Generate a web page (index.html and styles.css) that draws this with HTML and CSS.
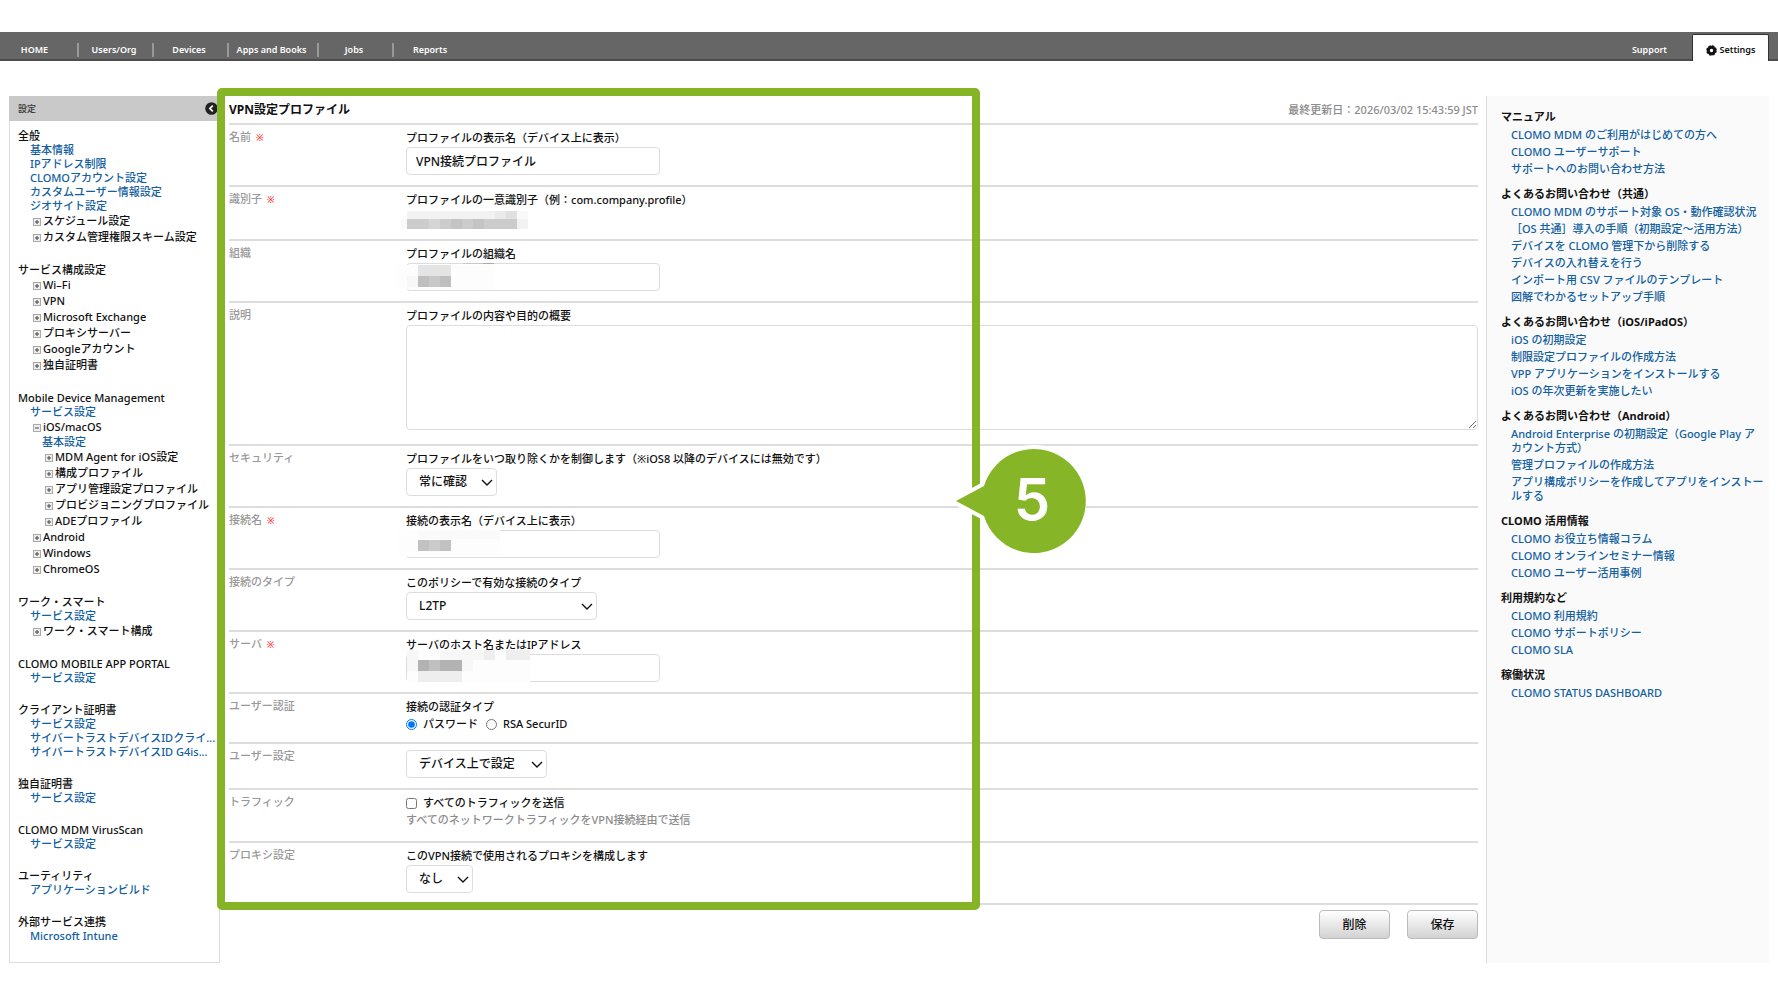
FILE: index.html
```html
<!DOCTYPE html>
<html lang="ja">
<head>
    <meta charset="UTF-8">
    <meta name="viewport" content="width=device-width, initial-scale=1.0">
    <title>VPN設定プロファイル</title>
    <link rel="stylesheet" href="styles.css">
</head>
<body>

    <!-- 共通アイコン -->
    <svg class="defs" width="0" height="0" aria-hidden="true">
        <symbol id="plus" viewBox="0 0 8 8">
            <rect x=".5" y=".5" width="7" height="7" fill="#eee" stroke="#aaa"/>
            <path d="M2 4h4M4 2v4" stroke="#444"/>
        </symbol>
        <symbol id="minus" viewBox="0 0 8 8">
            <rect x=".5" y=".5" width="7" height="7" fill="#eee" stroke="#aaa"/>
            <path d="M2 4h4" stroke="#444"/>
        </symbol>
    </svg>

    <!-- ヘッダー -->
    <header class="header">
        <nav class="nav">
            <a href="#">HOME</a>
            <a href="#">Users/Org</a>
            <a href="#">Devices</a>
            <a href="#" class="wide">Apps and Books</a>
            <a href="#">Jobs</a>
            <a href="#">Reports</a>
        </nav>
        <nav class="nav-right">
            <a href="#">Support</a>
            <a href="#" class="current">
                <svg width="11" height="11" viewBox="0 0 11 11"><circle cx="5.5" cy="5.5" r="3.2" fill="none" stroke="#111" stroke-width="3"/><circle cx="5.5" cy="5.5" r="4.7" fill="none" stroke="#111" stroke-width="1.2" stroke-dasharray="2.4 1.29"/></svg>
                Settings
            </a>
        </nav>
    </header>

    <div class="layout">

        <!-- 左メニュー -->
        <aside class="sidebar">
            <div class="sidebar-head">
                <span>設定</span>
                <button type="button" class="collapse" aria-label="閉じる">
                    <svg width="13" height="13" viewBox="0 0 13 13"><circle cx="6.5" cy="6.5" r="6.3" fill="#222"/><path d="M7.8 3.6 4.9 6.5l2.9 2.9" fill="none" stroke="#fff" stroke-width="1.7"/></svg>
                </button>
            </div>
            <div class="menu">
                <section>
                    <h2>全般</h2>
                    <a href="#">基本情報</a>
                    <a href="#">IPアドレス制限</a>
                    <a href="#">CLOMOアカウント設定</a>
                    <a href="#">カスタムユーザー情報設定</a>
                    <a href="#">ジオサイト設定</a>
                    <button type="button"><svg><use href="#plus"/></svg>スケジュール設定</button>
                    <button type="button"><svg><use href="#plus"/></svg>カスタム管理権限スキーム設定</button>
                </section>
                <section>
                    <h2>サービス構成設定</h2>
                    <button type="button"><svg><use href="#plus"/></svg>Wi–Fi</button>
                    <button type="button"><svg><use href="#plus"/></svg>VPN</button>
                    <button type="button"><svg><use href="#plus"/></svg>Microsoft Exchange</button>
                    <button type="button"><svg><use href="#plus"/></svg>プロキシサーバー</button>
                    <button type="button"><svg><use href="#plus"/></svg>Googleアカウント</button>
                    <button type="button"><svg><use href="#plus"/></svg>独自証明書</button>
                </section>
                <section>
                    <h2>Mobile Device Management</h2>
                    <a href="#">サービス設定</a>
                    <button type="button"><svg><use href="#minus"/></svg>iOS/macOS</button>
                    <div class="submenu">
                        <a href="#">基本設定</a>
                        <button type="button"><svg><use href="#plus"/></svg>MDM Agent for iOS設定</button>
                        <button type="button"><svg><use href="#plus"/></svg>構成プロファイル</button>
                        <button type="button"><svg><use href="#plus"/></svg>アプリ管理設定プロファイル</button>
                        <button type="button"><svg><use href="#plus"/></svg>プロビジョニングプロファイル</button>
                        <button type="button"><svg><use href="#plus"/></svg>ADEプロファイル</button>
                    </div>
                    <button type="button"><svg><use href="#plus"/></svg>Android</button>
                    <button type="button"><svg><use href="#plus"/></svg>Windows</button>
                    <button type="button"><svg><use href="#plus"/></svg>ChromeOS</button>
                </section>
                <section>
                    <h2>ワーク・スマート</h2>
                    <a href="#">サービス設定</a>
                    <button type="button"><svg><use href="#plus"/></svg>ワーク・スマート構成</button>
                </section>
                <section>
                    <h2>CLOMO MOBILE APP PORTAL</h2>
                    <a href="#">サービス設定</a>
                </section>
                <section>
                    <h2>クライアント証明書</h2>
                    <a href="#">サービス設定</a>
                    <a href="#">サイバートラストデバイスIDクライ...</a>
                    <a href="#">サイバートラストデバイスID G4is...</a>
                </section>
                <section>
                    <h2>独自証明書</h2>
                    <a href="#">サービス設定</a>
                </section>
                <section>
                    <h2>CLOMO MDM VirusScan</h2>
                    <a href="#">サービス設定</a>
                </section>
                <section>
                    <h2>ユーティリティ</h2>
                    <a href="#">アプリケーションビルド</a>
                </section>
                <section>
                    <h2>外部サービス連携</h2>
                    <a href="#">Microsoft Intune</a>
                </section>
            </div>
        </aside>

        <!-- 設定フォーム -->
        <main>
            <form>
                <div class="form-body">
                    <div class="title-bar">
                        <h1>VPN設定プロファイル</h1>
                        <span class="updated">最終更新日：2026/03/02 15:43:59 JST</span>
                    </div>

                    <div class="row">
                        <div class="name">名前 <em>※</em></div>
                        <div class="field">
                            <label for="name">プロファイルの表示名（デバイス上に表示）</label>
                            <input type="text" id="name" value="VPN接続プロファイル">
                        </div>
                    </div>

                    <div class="row">
                        <div class="name">識別子 <em>※</em></div>
                        <div class="field">
                            <p>プロファイルの一意識別子（例：com.company.profile）</p>
                            <svg class="mask-id" width="127" height="18" viewBox="0 0 127 18" shape-rendering="crispEdges">
                                <path fill="#f9f9f9" d="M0 8h6v10H0zM116 0h11v8h-11z"/>
                                <path fill="#f2f2f2" d="M6 0h88v8H6zM116 8h11v10h-11z"/>
                                <path fill="#eaeaea" d="M94 0h11v8H94z"/>
                                <path fill="#e0e0e0" d="M105 0h11v8h-11z"/>
                                <path fill="#cccccc" d="M6 8h110v10H6z"/>
                                <path fill="#d5d5d5" d="M28 8h11v10H28z"/>
                                <path fill="#c4c4c4" d="M50 8h11v10H50zM72 8h11v10H72z"/>
                            </svg>
                        </div>
                    </div>

                    <div class="row">
                        <div class="name">組織</div>
                        <div class="field">
                            <label for="org">プロファイルの組織名</label>
                            <div class="masked">
                                <input type="text" id="org">
                                <svg width="98" height="26" viewBox="0 0 98 26" shape-rendering="crispEdges">
                                    <path fill="#fdfdfd" d="M0 2h98v24H0z"/>
                                    <path fill="#f7f7f7" d="M11 13h11v11H11z"/>
                                    <path fill="#e4e4e4" d="M22 2h33v11H22z"/>
                                    <path fill="#bfbfbf" d="M22 13h33v11H22z"/>
                                    <path fill="#c8c8c8" d="M33 13h11v11H33zM67 0h20v1H67z"/>
                                    <path fill="#aaaaaa" d="M87 0h11v1H87z"/>
                                </svg>
                            </div>
                        </div>
                    </div>

                    <div class="row">
                        <div class="name">説明</div>
                        <div class="field">
                            <label for="desc">プロファイルの内容や目的の概要</label>
                            <textarea id="desc"></textarea>
                        </div>
                    </div>

                    <div class="row">
                        <div class="name">セキュリティ</div>
                        <div class="field">
                            <label for="security">プロファイルをいつ取り除くかを制御します（※iOS8 以降のデバイスには無効です）</label>
                            <select id="security" class="w-small"><option>常に確認</option></select>
                        </div>
                    </div>

                    <div class="row">
                        <div class="name">接続名 <em>※</em></div>
                        <div class="field">
                            <label for="conn">接続の表示名（デバイス上に表示）</label>
                            <div class="masked">
                                <input type="text" id="conn">
                                <svg width="104" height="26" viewBox="0 0 104 26" shape-rendering="crispEdges">
                                    <path fill="#fdfdfd" d="M3 0h101v26H3z"/>
                                    <path fill="#fafafa" d="M22 0h82v9H22z"/>
                                    <path fill="#c2c2c2" d="M22 10h33v11H22z"/>
                                    <path fill="#cbcbcb" d="M33 10h11v11H33z"/>
                                </svg>
                            </div>
                        </div>
                    </div>

                    <div class="row">
                        <div class="name">接続のタイプ</div>
                        <div class="field">
                            <label for="type">このポリシーで有効な接続のタイプ</label>
                            <select id="type" class="w-large"><option>L2TP</option></select>
                        </div>
                    </div>

                    <div class="row">
                        <div class="name">サーバ <em>※</em></div>
                        <div class="field">
                            <label for="server">サーバのホスト名またはIPアドレス</label>
                            <div class="masked server">
                                <input type="text" id="server">
                                <svg width="134" height="32" viewBox="0 0 134 32" shape-rendering="crispEdges">
                                    <path fill="#fdfdfd" d="M11 0h123v32H11z"/>
                                    <path fill="#f7f7f7" d="M11 0h11v21H11zM66 10h11v11H66zM44 0h44v10H44z"/>
                                    <path fill="#eeeeee" d="M88 0h11v10H88zM110 0h24v10h-24zM22 21h44v11H22z"/>
                                    <path fill="#b2b2b2" d="M22 10h44v11H22z"/>
                                    <path fill="#c0c0c0" d="M33 10h11v11H33z"/>
                                </svg>
                            </div>
                        </div>
                    </div>

                    <div class="row">
                        <div class="name">ユーザー認証</div>
                        <div class="field">
                            <p>接続の認証タイプ</p>
                            <div class="choices">
                                <label><input type="radio" name="auth" checked>パスワード</label>
                                <label><input type="radio" name="auth">RSA SecurID</label>
                            </div>
                        </div>
                    </div>

                    <div class="row">
                        <div class="name">ユーザー設定</div>
                        <div class="field">
                            <select class="w-medium" aria-label="ユーザー設定"><option>デバイス上で設定</option></select>
                        </div>
                    </div>

                    <div class="row">
                        <div class="name">トラフィック</div>
                        <div class="field">
                            <label class="check"><input type="checkbox">すべてのトラフィックを送信</label>
                            <p class="note">すべてのネットワークトラフィックをVPN接続経由で送信</p>
                        </div>
                    </div>

                    <div class="row">
                        <div class="name">プロキシ設定</div>
                        <div class="field">
                            <label for="proxy">このVPN接続で使用されるプロキシを構成します</label>
                            <select id="proxy" class="w-tiny"><option>なし</option></select>
                        </div>
                    </div>

                    <!-- 手順の枠と番号 -->
                    <div class="guide">
                        <svg class="guide-number" width="136" height="112" viewBox="0 0 136 112">
                            <path d="M6 56 34 41A52 52 0 1 1 34 71Z" fill="#fff" stroke="#fff" stroke-width="8"/>
                            <path d="M6 56 34 41A52 52 0 1 1 34 71Z" fill="#86b627"/>
                            <text x="82" y="75" text-anchor="middle">5</text>
                        </svg>
                    </div>
                </div>

                <div class="actions">
                    <button type="button">削除</button>
                    <button type="submit">保存</button>
                </div>
            </form>
        </main>

        <!-- ヘルプ -->
        <aside class="help">
            <section>
                <h2>マニュアル</h2>
                <a href="#">CLOMO MDM のご利用がはじめての方へ</a>
                <a href="#">CLOMO ユーザーサポート</a>
                <a href="#">サポートへのお問い合わせ方法</a>
            </section>
            <section>
                <h2>よくあるお問い合わせ（共通）</h2>
                <a href="#">CLOMO MDM のサポート対象 OS・動作確認状況</a>
                <a href="#">［OS 共通］導入の手順（初期設定〜活用方法）</a>
                <a href="#">デバイスを CLOMO 管理下から削除する</a>
                <a href="#">デバイスの入れ替えを行う</a>
                <a href="#">インポート用 CSV ファイルのテンプレート</a>
                <a href="#">図解でわかるセットアップ手順</a>
            </section>
            <section>
                <h2>よくあるお問い合わせ（iOS/iPadOS）</h2>
                <a href="#">iOS の初期設定</a>
                <a href="#">制限設定プロファイルの作成方法</a>
                <a href="#">VPP アプリケーションをインストールする</a>
                <a href="#">iOS の年次更新を実施したい</a>
            </section>
            <section>
                <h2>よくあるお問い合わせ（Android）</h2>
                <a href="#">Android Enterprise の初期設定（Google Play アカウント方式）</a>
                <a href="#">管理プロファイルの作成方法</a>
                <a href="#">アプリ構成ポリシーを作成してアプリをインストールする</a>
            </section>
            <section>
                <h2>CLOMO 活用情報</h2>
                <a href="#">CLOMO お役立ち情報コラム</a>
                <a href="#">CLOMO オンラインセミナー情報</a>
                <a href="#">CLOMO ユーザー活用事例</a>
            </section>
            <section>
                <h2>利用規約など</h2>
                <a href="#">CLOMO 利用規約</a>
                <a href="#">CLOMO サポートポリシー</a>
                <a href="#">CLOMO SLA</a>
            </section>
            <section>
                <h2>稼働状況</h2>
                <a href="#">CLOMO STATUS DASHBOARD</a>
            </section>
        </aside>
    </div>

</body>
</html>
```

FILE: styles.css
```css
* {
    box-sizing: border-box;
}

body {
    margin: 32px 0 0;
    background-color: #fff;
    color: #111;
    font-family: "Noto Sans", "Noto Sans CJK JP", sans-serif;
    font-size: 11px;
    font-weight: 500;
    line-height: 14px;
}

h1, h2, p {
    margin: 0;
    font-size: inherit;
}

a {
    color: #12609f;
    text-decoration: none;
}

input, select, textarea, button {
    font: inherit;
    color: inherit;
}

.defs {
    position: absolute;
}

/* ヘッダー */
.header {
    display: flex;
    justify-content: space-between;
    height: 29px;
    padding-right: 9px;
    background-color: #666;
    border-bottom: 2px solid #4c4c4c;
    font-size: 9px;
    font-weight: 600;
}

.header a {
    color: #fff;
}

.nav, .nav-right {
    display: flex;
    align-items: center;
}

.nav {
    padding-top: 8px;
}

.nav a {
    width: 75px;
    padding-right: 3px;
    text-align: center;
    border-right: 2px solid #999;
}

.nav a:first-child {
    width: 79px;
    padding-right: 8px;
}

.nav a.wide {
    width: 90px;
}

.nav a:last-child {
    border-right: none;
}

.nav-right {
    gap: 25px;
    align-items: flex-end;
    margin-bottom: -2px;
}

.nav-right a {
    padding-bottom: 4px;
}

.nav-right .current {
    display: flex;
    align-items: center;
    justify-content: center;
    gap: 3px;
    width: 77px;
    height: 27px;
    padding: 4px 0 0;
    background-color: #fff;
    border: 1px solid #333;
    border-bottom: none;
    border-radius: 2px 2px 0 0;
    color: #111;
}

/* 全体 */
.layout {
    display: grid;
    grid-template-columns: 211px 1fr 283px;
    margin: 35px 9px 0;
}

/* 左メニュー */
.sidebar {
    border: 1px solid #ddd;
    border-top: none;
}

.sidebar-head {
    display: flex;
    align-items: center;
    justify-content: space-between;
    height: 25px;
    margin: 0 -1px;
    padding: 0 2px 0 9px;
    background-color: #c9c9c9;
    font-size: 9px;
    color: #333;
}

.collapse {
    display: flex;
    padding: 0;
    background: none;
    border: none;
}

.menu {
    padding: 8px 0 19px 8px;
    white-space: nowrap;
}

.menu section {
    margin-bottom: 18px;
}

.menu section:last-child {
    margin-bottom: 0;
}

.menu h2 {
    font-weight: 500;
}

.menu a {
    display: block;
    padding-left: 12px;
}

.menu button {
    display: flex;
    align-items: center;
    gap: 2px;
    padding: 0 0 0 15px;
    line-height: 16px;
    background: none;
    border: none;
}

.menu button svg {
    width: 8px;
    height: 8px;
    margin-top: 2px;
}

.submenu {
    padding-left: 12px;
}

/* フォーム */
main {
    padding: 0 8px 0 9px;
}

.form-body {
    position: relative;
    border-bottom: 2px solid #ddd;
}

.title-bar {
    display: flex;
    align-items: center;
    justify-content: space-between;
    height: 27px;
}

.title-bar h1 {
    font-size: 12px;
    font-weight: 700;
}

.updated {
    color: #8c8c8c;
}

.row {
    display: grid;
    grid-template-columns: 177px 1fr;
    padding: 5px 0 10px;
    border-top: 2px solid #ddd;
}

.name {
    color: #999;
}

.name em {
    margin-left: 2px;
    color: #f22;
    font-size: 9px;
    font-style: normal;
}

.field {
    padding-top: 1px;
}

.field > label, .field > p {
    display: block;
    margin-bottom: 2px;
}

.field input[type="text"], .field select {
    display: block;
    height: 28px;
    background-color: #fff;
    border: 1px solid #ddd;
    border-radius: 4px;
    font-size: 12px;
}

.field input[type="text"] {
    width: 254px;
    padding: 0 9px;
}

.field textarea {
    display: block;
    width: 100%;
    height: 105px;
    margin-bottom: 4px;
    border: 1px solid #ddd;
    border-radius: 4px;
}

.field select {
    padding: 0 22px 0 12px;
    appearance: none;
    background-image: url("data:image/svg+xml,%3Csvg xmlns='http://www.w3.org/2000/svg' width='12' height='7'%3E%3Cpath d='M1 1 6 6 11 1' fill='none' stroke='%23111' stroke-width='1.4'/%3E%3C/svg%3E");
    background-repeat: no-repeat;
    background-position: right 3px center;
}

.w-tiny { width: 67px; }
.w-small { width: 91px; }
.w-medium { width: 141px; }
.w-large { width: 191px; }

/* 伏せ字 */
.mask-id {
    display: block;
    margin: 4px 0 0 -5px;
}

.masked {
    position: relative;
}

.masked svg {
    position: absolute;
    top: 0;
    left: -10px;
}

.masked.server svg {
    top: -4px;
}

.choices {
    display: flex;
    gap: 8px;
    line-height: 16px;
}

.choices label, .field > .check {
    display: flex;
    align-items: center;
    gap: 6px;
}

.choices input, .check input {
    width: 11px;
    height: 11px;
    margin: 0;
}

.field > .check {
    margin-bottom: 3px;
}

.field > .note {
    margin-bottom: 4px;
    color: #8c8c8c;
}

/* 手順の枠 */
.guide {
    position: absolute;
    top: -8px;
    bottom: -7px;
    left: -12px;
    width: 763px;
    border: 8px solid #86b427;
    border-radius: 5px;
    pointer-events: none;
}

.guide-number {
    position: absolute;
    top: 349px;
    right: -114px;
}

.guide-number text {
    font-family: "Inter", sans-serif;
    font-size: 58px;
    font-weight: 600;
    fill: #fff;
}

.actions {
    display: flex;
    justify-content: flex-end;
    gap: 17px;
    padding-top: 5px;
}

.actions button {
    width: 71px;
    height: 29px;
    background: linear-gradient(#fff, #d2d2d2);
    border: 1px solid #bbb;
    border-radius: 4px;
    font-size: 12px;
}

/* ヘルプ */
.help {
    padding: 14px 5px 0 14px;
    background-color: #fafafa;
    border-left: 1px solid #ddd;
}

.help section {
    margin-bottom: 11px;
}

.help h2 {
    margin-bottom: 4px;
    font-weight: 700;
}

.help a {
    display: block;
    margin: 0 0 3px 10px;
}
```
